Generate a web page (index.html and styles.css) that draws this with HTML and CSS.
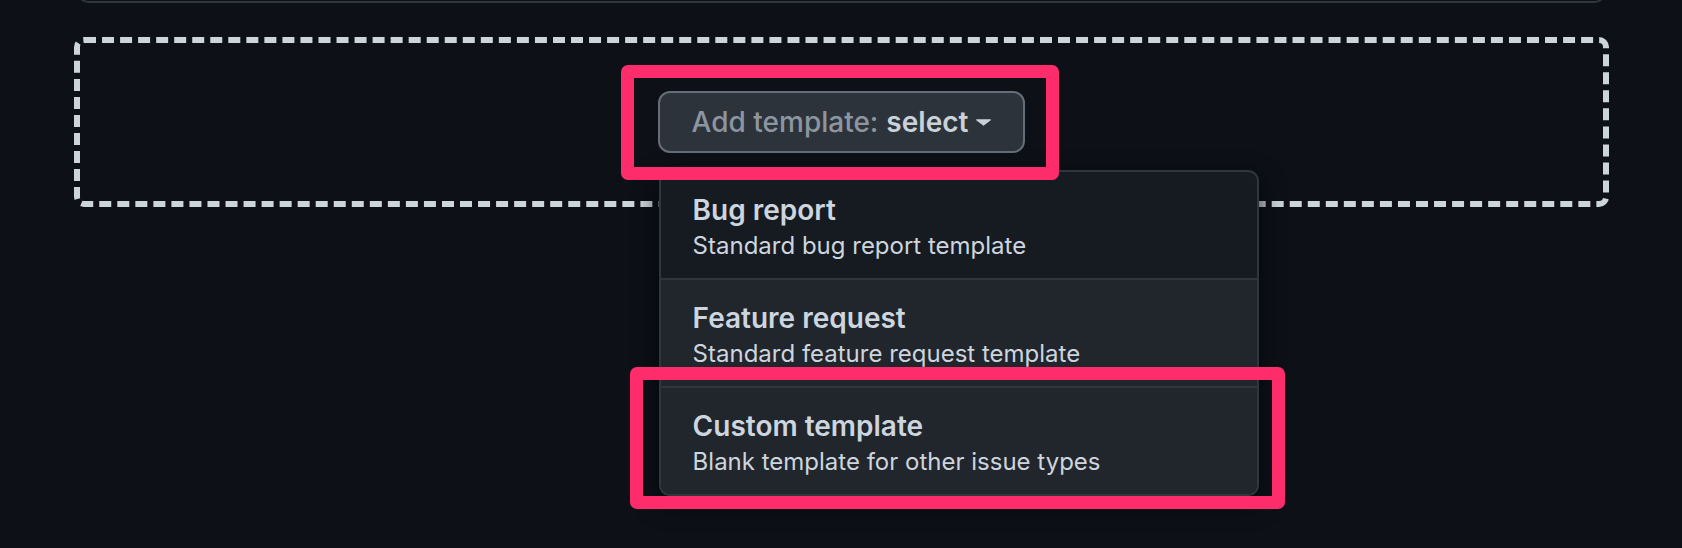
FILE: index.html
```html
<!DOCTYPE html>
<html lang="en">
<head>
    <meta charset="UTF-8">
    <title>Add template</title>
    <link rel="stylesheet" href="styles.css">
</head>
<body>

<div class="page">
    <!-- bottom edge of the card above -->
    <div class="prev-card"></div>

    <!-- Drop zone for a new template -->
    <div class="drop-zone">
        <div class="picker">
            <button class="picker-button" type="button">
                <span class="picker-label">Add template:</span>
                <span class="picker-value">select</span>
                <svg class="caret" width="15" height="7" viewBox="0 0 15 7" aria-hidden="true">
                    <path d="M0.6 0.3 H14.4 a0.5 0.5 0 0 1 0.35 0.85 L7.85 6.6 a0.5 0.5 0 0 1 -0.7 0 L0.25 1.15 A0.5 0.5 0 0 1 0.6 0.3 Z"/>
                </svg>
            </button>
            <span class="mark mark-button"></span>

            <div class="menu">
                <div class="menu-item">
                    <div class="menu-title">Bug report</div>
                    <div class="menu-desc">Standard bug report template</div>
                </div>
                <div class="menu-item alt">
                    <div class="menu-title">Feature request</div>
                    <div class="menu-desc">Standard feature request template</div>
                </div>
                <div class="menu-item alt">
                    <div class="menu-title">Custom template</div>
                    <div class="menu-desc">Blank template for other issue types</div>
                </div>
            </div>
            <span class="mark mark-item"></span>
        </div>
    </div>
</div>

</body>
</html>
```

FILE: styles.css
```css
body {
    margin: 0;
    background-color: #0d1117;
    font-family: Inter, "Liberation Sans", sans-serif;
    color: #c9d1d9;
}
.page {
    padding: 0 73px 0 74px;
    height: 548px;
    box-sizing: border-box;
    overflow: hidden;
}
.prev-card {
    margin: -20px 3px 0 3px;
    height: 23px;
    box-sizing: border-box;
    border: 2px solid #30363d;
    border-radius: 12px;
}
.drop-zone {
    margin-top: 34px;
    height: 170px;
    box-sizing: border-box;
    border: 6px dashed #cdd5dc;
    border-radius: 10px;
    display: flex;
    align-items: center;
    justify-content: center;
}
.picker {
    position: relative;
}
.picker-button {
    display: flex;
    align-items: center;
    height: 62px;
    box-sizing: border-box;
    padding: 0 32px;
    background-color: #2d333b;
    border: 2px solid #656e78;
    border-radius: 12px;
    font-family: inherit;
    font-size: 28px;
    line-height: 32px;
    color: #8d96a0;
    cursor: pointer;
}
.picker-label {
    font-weight: 500;
}
.picker-value {
    margin-left: 8px;
    font-weight: 600;
    color: #c9d1d9;
}
.caret {
    margin-left: 8px;
    fill: #c9d1d9;
}

/* dropdown menu */
.menu {
    position: absolute;
    left: 1px;
    top: 79px;
    width: 600px;
    box-sizing: border-box;
    border: 2px solid #30363d;
    border-radius: 11px;
    background-color: #161b22;
    box-shadow: 0 8px 24px rgba(1, 4, 9, 0.85);
    overflow: hidden;
    z-index: 1;
}
.menu-item {
    padding: 20px 32px 16px;
    border-bottom: 2px solid #30363d;
}
.menu-item:last-child {
    border-bottom: none;
}
.menu-item.alt {
    background-color: #21262d;
}
.menu-title {
    font-size: 28px;
    line-height: 36px;
    font-weight: 600;
    color: #cdd5de;
}
.menu-desc {
    margin-top: 2px;
    font-size: 24px;
    line-height: 32px;
    color: #cdd5de;
}

/* pink highlight marks */
.mark {
    position: absolute;
    border: 13px solid #fe2c6b;
    border-radius: 7px;
    z-index: 2;
    pointer-events: none;
}
.mark-button {
    left: -37px;
    top: -26px;
    width: 438px;
    height: 115px;
    box-sizing: border-box;
}
.mark-item {
    left: -28px;
    top: 276px;
    width: 655px;
    height: 142px;
    box-sizing: border-box;
}
```
